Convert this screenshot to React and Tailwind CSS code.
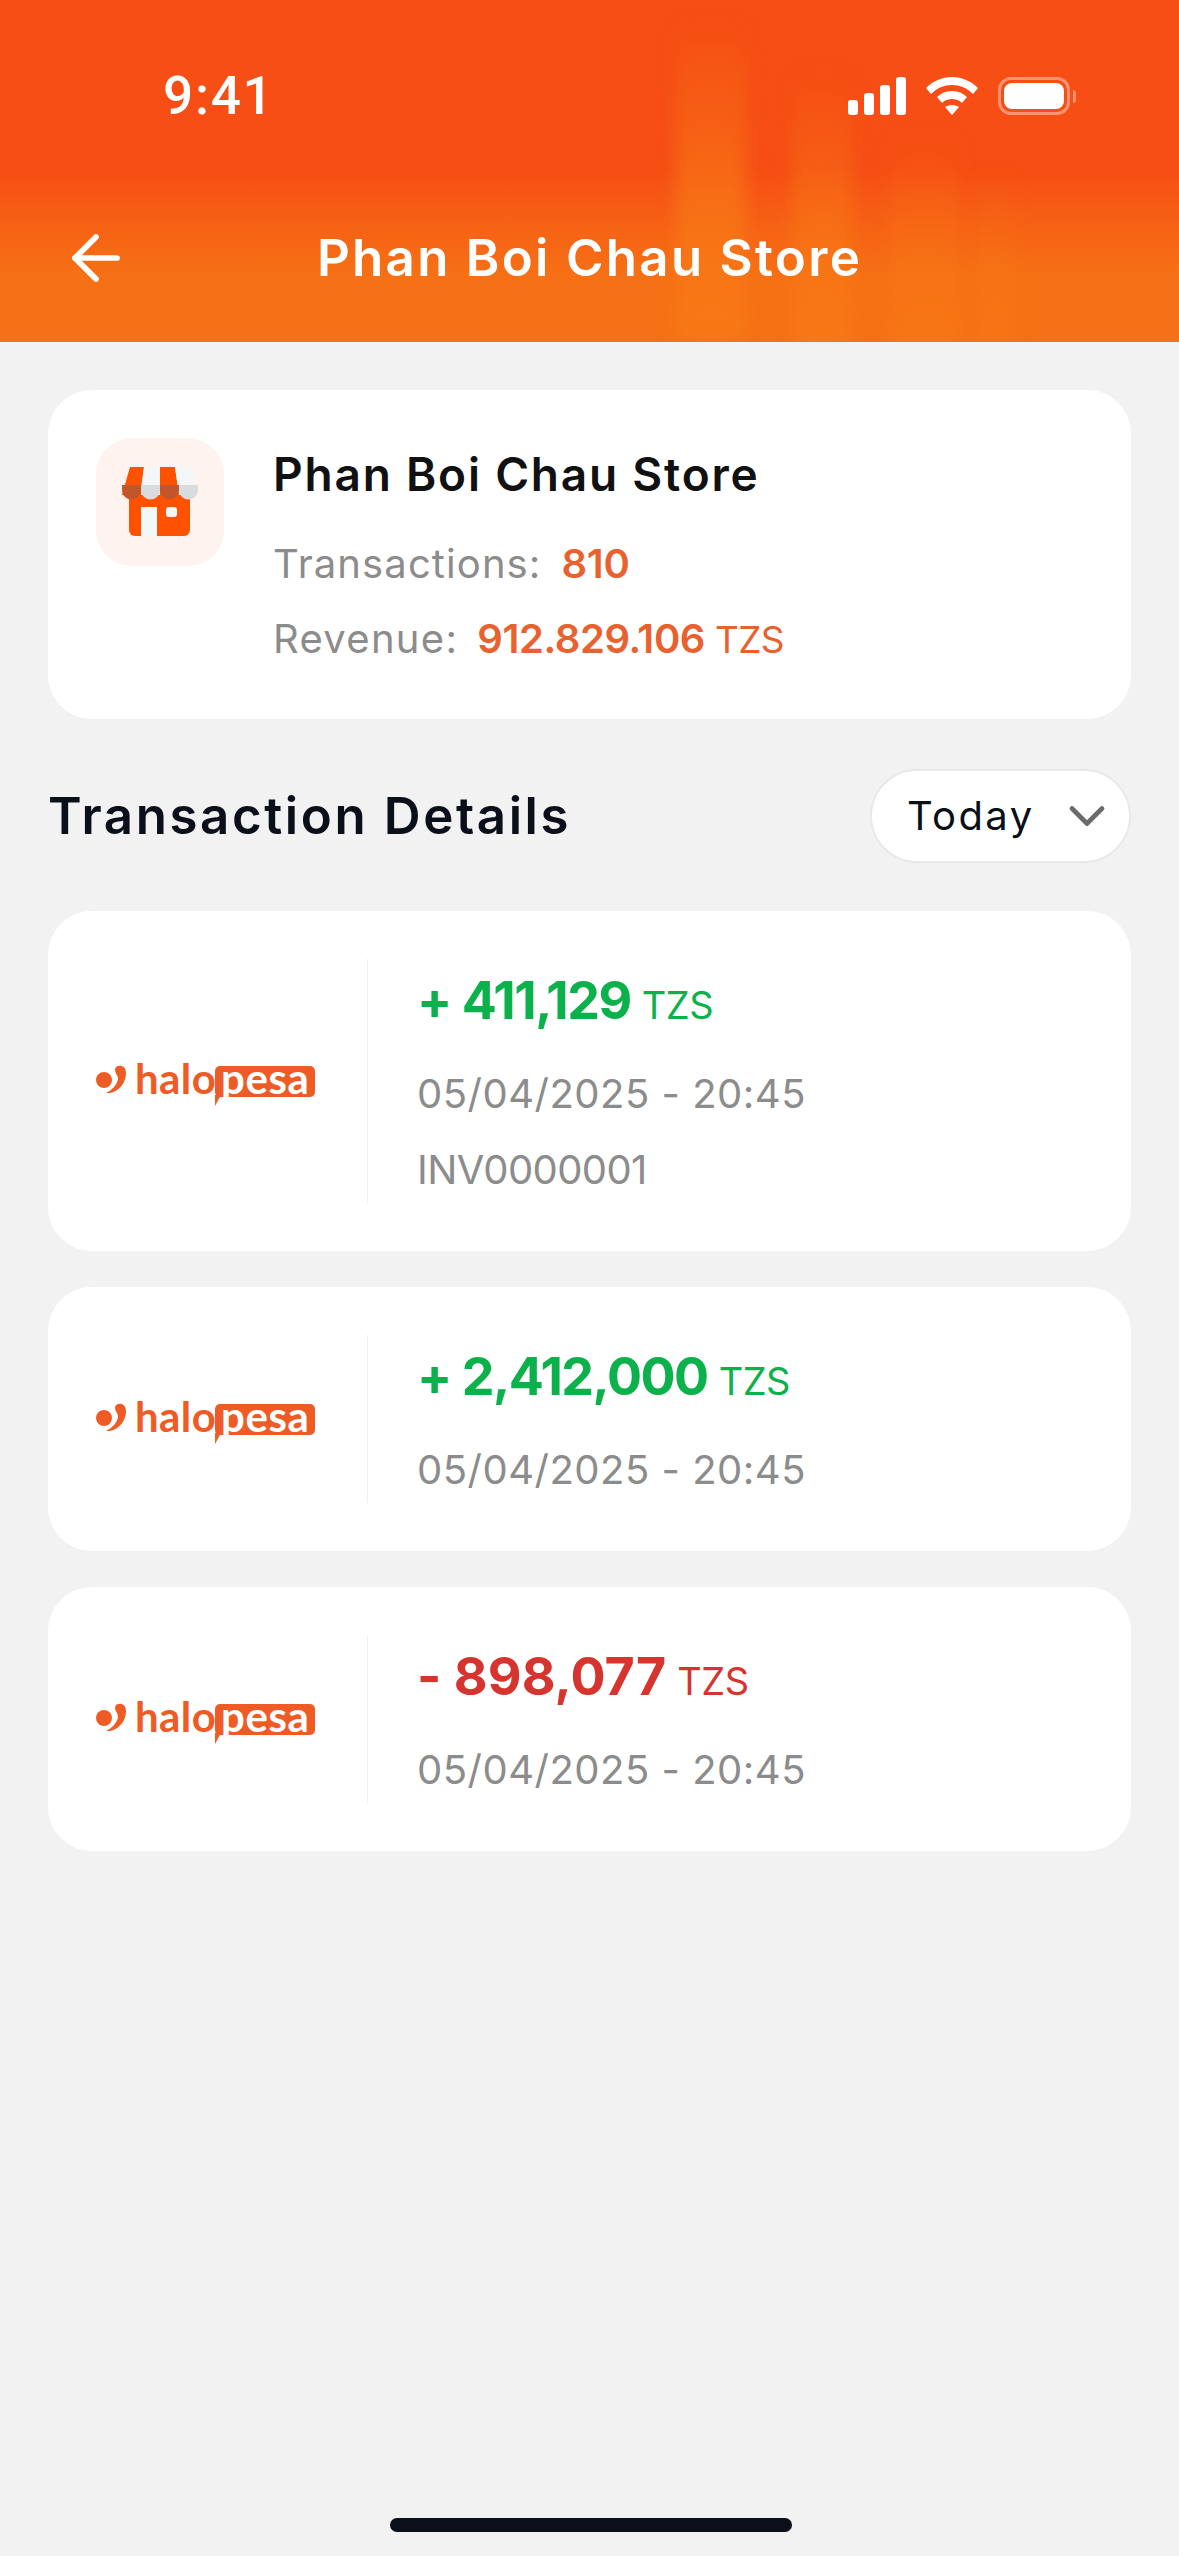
import React from 'react';
import { ArrowLeft, ChevronDown } from 'lucide-react';

const StatusIcons = () => (
  <div className="flex items-center gap-[20px]">
    <svg width="58" height="38" viewBox="0 0 58 38" fill="white">
      <rect x="0" y="23" width="10" height="15" rx="3" />
      <rect x="16" y="16" width="10" height="22" rx="3" />
      <rect x="32" y="8" width="10" height="30" rx="3" />
      <rect x="48" y="0" width="10" height="38" rx="3" />
    </svg>
    <svg width="52" height="38" viewBox="0 0 52 38" fill="white">
      <path d="M26 0C16 0 7 4 0 11l5 6C11 11 18 8 26 8s15 3 21 9l5-6C45 4 36 0 26 0z" />
      <path d="M26 14c-6 0-11 2-15 6l5 6c3-3 6-4 10-4s7 1 10 4l5-6c-4-4-9-6-15-6z" />
      <path d="M26 28c-3 0-5 1-7 2l7 8 7-8c-2-1-4-2-7-2z" />
    </svg>
    <div className="flex items-center gap-[3px]">
      <div className="w-[72px] h-[38px] rounded-[13px] border-[3px] border-white/40 p-[3px]">
        <div className="w-full h-full rounded-[8px] bg-white" />
      </div>
      <div className="w-[3px] h-[13px] rounded-r-full bg-white/40" />
    </div>
  </div>
);

const HaloLogo = () => (
  <div className="flex items-center w-[220px] h-[44px]">
    <svg width="32" height="32" viewBox="0 0 32 32" className="shrink-0 mr-[7px]">
      <circle cx="8" cy="15" r="8" fill="#EF5B25" />
      <path d="M20 2c4-3 10-1 10 6 0 12-10 21-20 20 6-3 11-8 12-14 0-5-5-7-2-12z" fill="#EF5B25" />
    </svg>
    <span className="text-[#EF5B25] text-[42px] leading-none font-bold font-['Lato',sans-serif] tracking-[0.4px] mb-[6px]">halo</span>
    <div className="relative -ml-[1px] bg-[#EF5B25] rounded-[5px] h-[31px] w-[100px] flex items-center justify-center">
      <span className="text-white text-[42px] leading-none font-bold font-['Lato',sans-serif] tracking-[0.6px] mb-[7px]">pesa</span>
      <div className="absolute left-0 top-[29px] w-0 h-0 border-l-[6px] border-l-[#EF5B25] border-b-[11px] border-b-transparent" />
    </div>
  </div>
);

const TransactionCard = ({ sign, amount, invoice, color, track = 'tracking-[-1.5px]' }) => (
  <div className="bg-white rounded-[44px] p-[48px] flex items-center">
    <div className="w-[271px] shrink-0">
      <HaloLogo />
    </div>
    <div className="w-px self-stretch bg-[#f0f0f0] mr-[49px]" />
    <div className="flex flex-col pb-[5px]">
      <div className={`flex items-baseline h-[56px] mt-[14px] ${color}`}>
        <span className={`text-[52px] leading-[56px] font-bold ${track}`}>{sign} {amount}</span>
        <span className="text-[38px] leading-[56px] ml-[11px] tracking-[-0.5px]">TZS</span>
      </div>
      <div className="text-[40px] leading-[56px] mt-[37px] text-[#8c8c8c] tracking-[0.5px]">05/04/2025 - 20:45</div>
      {invoice && (
        <div className="text-[40px] leading-[56px] mt-[20px] text-[#8c8c8c] tracking-[-0.6px]">{invoice}</div>
      )}
    </div>
  </div>
);

export default function App() {
  return (
    <div className="min-h-[2556px] bg-[#f2f2f2] relative font-['Inter',sans-serif]">
      {/* Header */}
      <div className="relative h-[342px] overflow-hidden bg-gradient-to-b from-[#F64E14] from-50% to-[#F67015] to-80%">
        <div className="absolute left-[676px] top-[20px] w-[70px] h-[322px] blur-[8px] bg-gradient-to-b from-transparent via-[#F77516]/70 to-[#F77816]" />
        <div className="absolute left-[792px] top-[70px] w-[60px] h-[290px] blur-[8px] bg-gradient-to-b from-transparent via-[#F77516]/60 to-[#F77816]" />
        <div className="absolute left-[890px] top-[130px] w-[70px] h-[230px] blur-[8px] bg-gradient-to-b from-transparent via-[#F77516]/40 to-[#F77816]/80" />
        <div className="absolute left-[975px] top-[170px] w-[40px] h-[190px] blur-[8px] bg-gradient-to-b from-transparent to-[#F77816]/60" />
        <div className="relative flex items-center justify-between pl-[163px] pr-[103px] pt-[69px]">
          <span className="text-white text-[53px] leading-[54px] font-medium tracking-[1.8px] font-['Roboto',sans-serif]">9:41</span>
          <StatusIcons />
        </div>
        <div className="relative flex items-center justify-center mt-[104px] h-[62px]">
          <ArrowLeft className="absolute left-[60px] text-white" size={72} strokeWidth={1.9} />
          <span className="text-white text-[51px] leading-[62px] font-semibold tracking-[2.3px]">Phan Boi Chau Store</span>
        </div>
      </div>

      {/* Store card */}
      <div className="px-[48px] pt-[48px]">
        <div className="bg-white rounded-[44px] p-[48px] flex h-[329px]">
          <div className="w-[128px] h-[128px] rounded-[36px] bg-[#FEF3EE] flex items-center justify-center shrink-0">
            <svg width="76" height="70" viewBox="0 0 76 70">
              <rect x="7" y="20" width="61" height="49" rx="6" fill="#FF5200" />
              <rect x="19" y="40" width="16" height="29" fill="#F5F6F7" />
              <rect x="44" y="40" width="11" height="10" rx="3" fill="#F5F6F7" />
              <path d="M8 0h14l-4 28H0z" fill="#FF5200" />
              <path d="M22 0h16v28H19z" fill="#F5F6F7" />
              <path d="M38 0h15l4 28H38z" fill="#FF5200" />
              <path d="M53 0h14q3 0 4 4l5 24H57z" fill="#F5F6F7" />
              <path d="M0 18h19v5a9.500 9.500 0 0 1-19 0z" fill="#C4552B" />
              <path d="M19 18h19v5a9.500 9.500 0 0 1-19 0z" fill="#D8DCDF" />
              <path d="M38 18h19v5a9.500 9.500 0 0 1-19 0z" fill="#C4552B" />
              <path d="M57 18h19v5a9.500 9.500 0 0 1-19 0z" fill="#D8DCDF" />
            </svg>
          </div>
          <div className="ml-[49px] flex flex-col">
            <div className="text-[46px] leading-[56px] font-semibold text-[#111] mt-[8px] tracking-[1.8px]">Phan Boi Chau Store</div>
            <div className="flex items-baseline mt-[34px] h-[56px] text-[40px] leading-[56px] text-[#8c8c8c] tracking-[1.1px]">
              Transactions:
              <span className="ml-[20px] font-semibold text-[#E8622F] tracking-[-0.2px]">810</span>
            </div>
            <div className="flex items-baseline mt-[19px] h-[56px] text-[40px] leading-[56px] text-[#8c8c8c] tracking-[1.3px]">
              Revenue:
              <span className="ml-[19px] font-semibold text-[#E8622F] tracking-[-0.4px]">912.829.106</span>
              <span className="ml-[10px] text-[37px] text-[#E8622F] tracking-[-0.7px]">TZS</span>
            </div>
          </div>
        </div>

        {/* Section title */}
        <div className="flex items-center justify-between mt-[50px]">
          <h2 className="text-[51px] font-semibold text-[#0B0F19] leading-[62px] tracking-[2.6px]">Transaction Details</h2>
          <button className="w-[261px] h-[94px] rounded-full bg-white border-[2px] border-[#e9e9e9] flex items-center pl-[35px] gap-[22px] text-[40px] tracking-[2.4px] leading-none text-[#0B0F19]">
            Today
            <ChevronDown className="text-[#6b6b6b]" size={60} strokeWidth={1.9} />
          </button>
        </div>

        {/* Transactions */}
        <div className="flex flex-col gap-[36px] mt-[48px]">
          <TransactionCard sign="+" amount="411,129" invoice="INV0000001" color="text-[#0DB14B]" />
          <TransactionCard sign="+" amount="2,412,000" color="text-[#0DB14B]" />
          <TransactionCard sign="-" amount="898,077" color="text-[#D6342F]" track="tracking-[0.1px]" />
        </div>
      </div>

      {/* Home indicator */}
      <div className="absolute bottom-[24px] left-[390px] w-[402px] h-[14px] rounded-full bg-[#0B0F19]" />
    </div>
  );
}
